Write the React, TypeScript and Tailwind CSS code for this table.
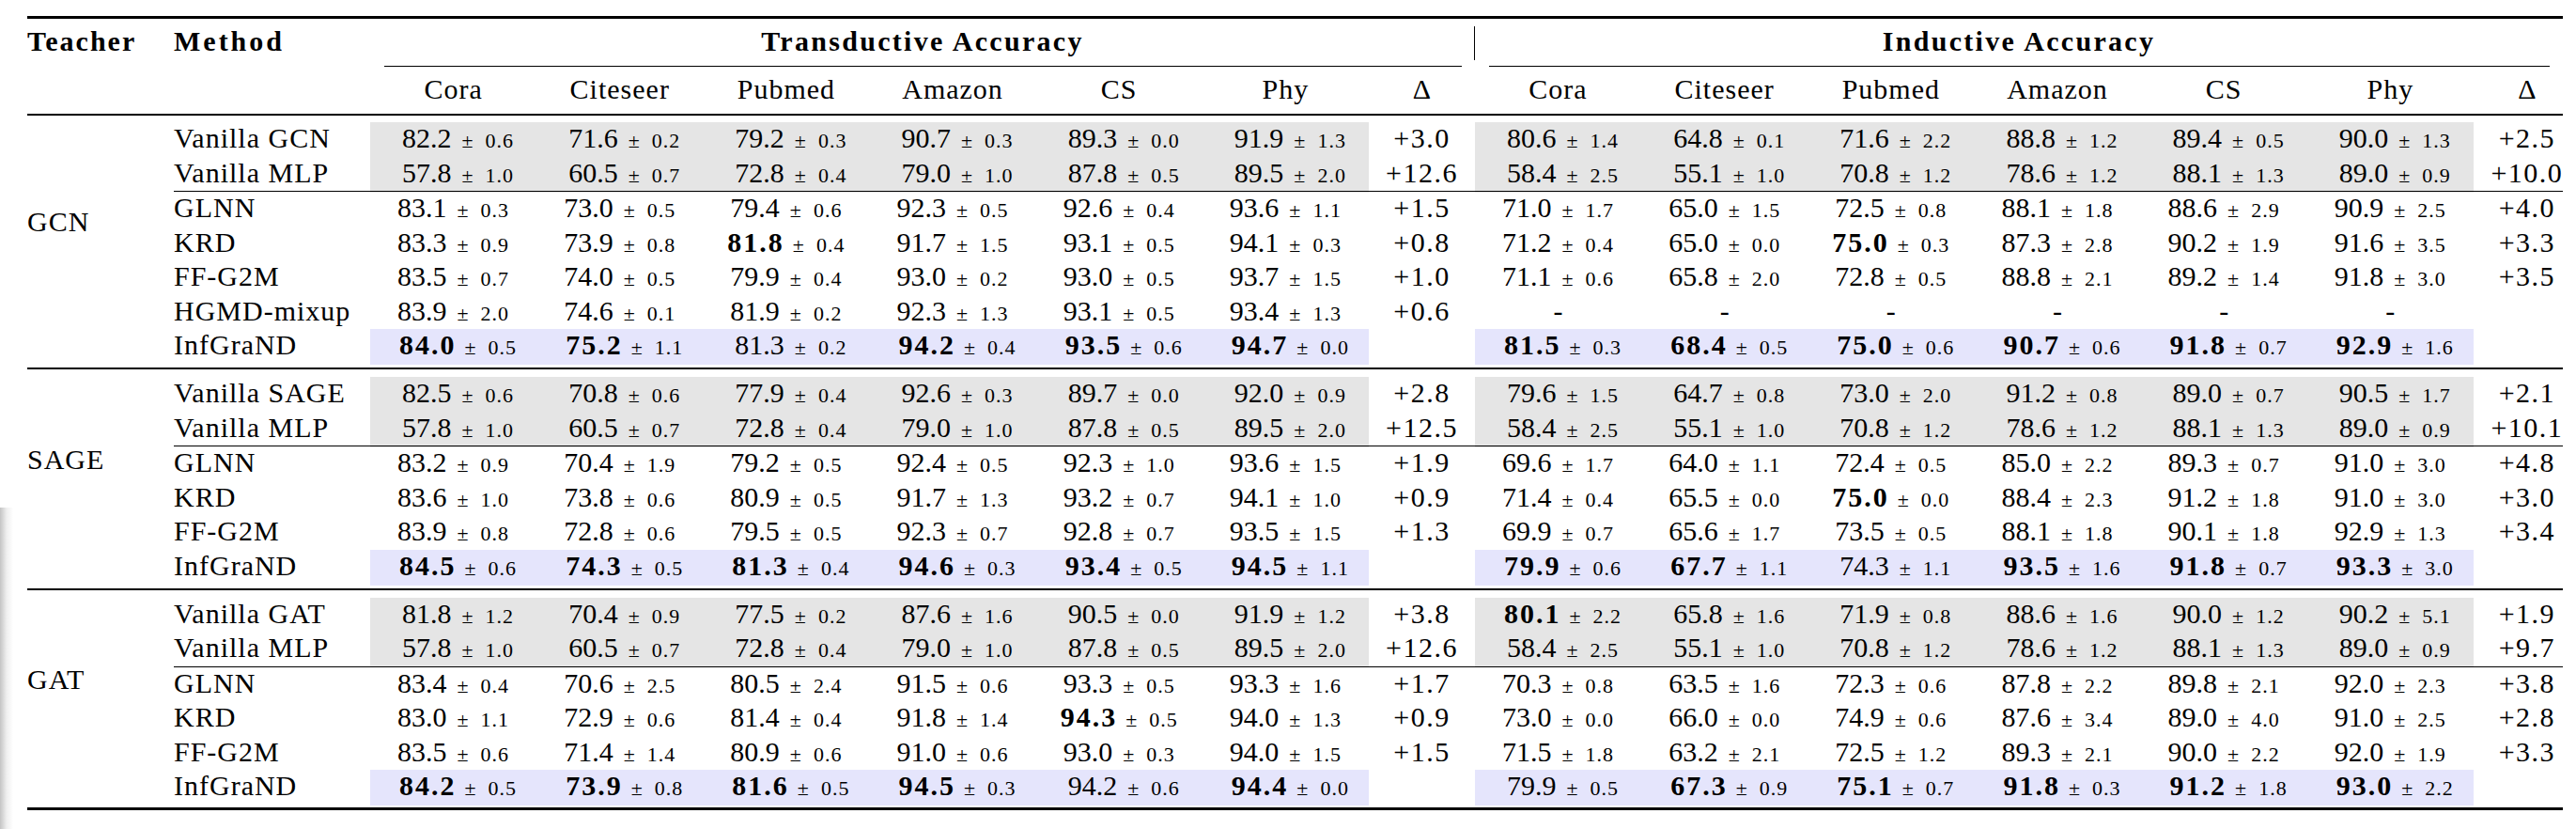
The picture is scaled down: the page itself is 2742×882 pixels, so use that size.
import React from "react";

type Row = string[];
type Section = { teacher: string; vanilla: Row[]; rest: Row[] };

const SECTIONS: Section[] = [
  {
    teacher: "GCN",
    vanilla: [
      ["Vanilla GCN", "82.2 0.6", "71.6 0.2", "79.2 0.3", "90.7 0.3", "89.3 0.0", "91.9 1.3", "+3.0", "80.6 1.4", "64.8 0.1", "71.6 2.2", "88.8 1.2", "89.4 0.5", "90.0 1.3", "+2.5"],
      ["Vanilla MLP", "57.8 1.0", "60.5 0.7", "72.8 0.4", "79.0 1.0", "87.8 0.5", "89.5 2.0", "+12.6", "58.4 2.5", "55.1 1.0", "70.8 1.2", "78.6 1.2", "88.1 1.3", "89.0 0.9", "+10.0"],
    ],
    rest: [
      ["GLNN", "83.1 0.3", "73.0 0.5", "79.4 0.6", "92.3 0.5", "92.6 0.4", "93.6 1.1", "+1.5", "71.0 1.7", "65.0 1.5", "72.5 0.8", "88.1 1.8", "88.6 2.9", "90.9 2.5", "+4.0"],
      ["KRD", "83.3 0.9", "73.9 0.8", "*81.8 0.4", "91.7 1.5", "93.1 0.5", "94.1 0.3", "+0.8", "71.2 0.4", "65.0 0.0", "*75.0 0.3", "87.3 2.8", "90.2 1.9", "91.6 3.5", "+3.3"],
      ["FF-G2M", "83.5 0.7", "74.0 0.5", "79.9 0.4", "93.0 0.2", "93.0 0.5", "93.7 1.5", "+1.0", "71.1 0.6", "65.8 2.0", "72.8 0.5", "88.8 2.1", "89.2 1.4", "91.8 3.0", "+3.5"],
      ["HGMD-mixup", "83.9 2.0", "74.6 0.1", "81.9 0.2", "92.3 1.3", "93.1 0.5", "93.4 1.3", "+0.6", "-", "-", "-", "-", "-", "-", ""],
      ["InfGraND", "*84.0 0.5", "*75.2 1.1", "81.3 0.2", "*94.2 0.4", "*93.5 0.6", "*94.7 0.0", "", "*81.5 0.3", "*68.4 0.5", "*75.0 0.6", "*90.7 0.6", "*91.8 0.7", "*92.9 1.6", ""],
    ],
  },
  {
    teacher: "SAGE",
    vanilla: [
      ["Vanilla SAGE", "82.5 0.6", "70.8 0.6", "77.9 0.4", "92.6 0.3", "89.7 0.0", "92.0 0.9", "+2.8", "79.6 1.5", "64.7 0.8", "73.0 2.0", "91.2 0.8", "89.0 0.7", "90.5 1.7", "+2.1"],
      ["Vanilla MLP", "57.8 1.0", "60.5 0.7", "72.8 0.4", "79.0 1.0", "87.8 0.5", "89.5 2.0", "+12.5", "58.4 2.5", "55.1 1.0", "70.8 1.2", "78.6 1.2", "88.1 1.3", "89.0 0.9", "+10.1"],
    ],
    rest: [
      ["GLNN", "83.2 0.9", "70.4 1.9", "79.2 0.5", "92.4 0.5", "92.3 1.0", "93.6 1.5", "+1.9", "69.6 1.7", "64.0 1.1", "72.4 0.5", "85.0 2.2", "89.3 0.7", "91.0 3.0", "+4.8"],
      ["KRD", "83.6 1.0", "73.8 0.6", "80.9 0.5", "91.7 1.3", "93.2 0.7", "94.1 1.0", "+0.9", "71.4 0.4", "65.5 0.0", "*75.0 0.0", "88.4 2.3", "91.2 1.8", "91.0 3.0", "+3.0"],
      ["FF-G2M", "83.9 0.8", "72.8 0.6", "79.5 0.5", "92.3 0.7", "92.8 0.7", "93.5 1.5", "+1.3", "69.9 0.7", "65.6 1.7", "73.5 0.5", "88.1 1.8", "90.1 1.8", "92.9 1.3", "+3.4"],
      ["InfGraND", "*84.5 0.6", "*74.3 0.5", "*81.3 0.4", "*94.6 0.3", "*93.4 0.5", "*94.5 1.1", "", "*79.9 0.6", "*67.7 1.1", "74.3 1.1", "*93.5 1.6", "*91.8 0.7", "*93.3 3.0", ""],
    ],
  },
  {
    teacher: "GAT",
    vanilla: [
      ["Vanilla GAT", "81.8 1.2", "70.4 0.9", "77.5 0.2", "87.6 1.6", "90.5 0.0", "91.9 1.2", "+3.8", "*80.1 2.2", "65.8 1.6", "71.9 0.8", "88.6 1.6", "90.0 1.2", "90.2 5.1", "+1.9"],
      ["Vanilla MLP", "57.8 1.0", "60.5 0.7", "72.8 0.4", "79.0 1.0", "87.8 0.5", "89.5 2.0", "+12.6", "58.4 2.5", "55.1 1.0", "70.8 1.2", "78.6 1.2", "88.1 1.3", "89.0 0.9", "+9.7"],
    ],
    rest: [
      ["GLNN", "83.4 0.4", "70.6 2.5", "80.5 2.4", "91.5 0.6", "93.3 0.5", "93.3 1.6", "+1.7", "70.3 0.8", "63.5 1.6", "72.3 0.6", "87.8 2.2", "89.8 2.1", "92.0 2.3", "+3.8"],
      ["KRD", "83.0 1.1", "72.9 0.6", "81.4 0.4", "91.8 1.4", "*94.3 0.5", "94.0 1.3", "+0.9", "73.0 0.0", "66.0 0.0", "74.9 0.6", "87.6 3.4", "89.0 4.0", "91.0 2.5", "+2.8"],
      ["FF-G2M", "83.5 0.6", "71.4 1.4", "80.9 0.6", "91.0 0.6", "93.0 0.3", "94.0 1.5", "+1.5", "71.5 1.8", "63.2 2.1", "72.5 1.2", "89.3 2.1", "90.0 2.2", "92.0 1.9", "+3.3"],
      ["InfGraND", "*84.2 0.5", "*73.9 0.8", "*81.6 0.5", "*94.5 0.3", "94.2 0.6", "*94.4 0.0", "", "79.9 0.5", "*67.3 0.9", "*75.1 0.7", "*91.8 0.3", "*91.2 1.8", "*93.0 2.2", ""],
    ],
  },
];

const ROW_GRID =
  "grid grid-cols-[209px_repeat(6,177.1667px)_113px_repeat(6,177.1667px)_95px]";
const FULL_GRID =
  "grid grid-cols-[156px_209px_repeat(6,177.1667px)_113px_repeat(6,177.1667px)_95px]";

function Value({ s }: { s: string }) {
  if (s === "-") return <span className="text-[30px]">-</span>;
  if (s === "") return null;
  const bold = s.startsWith("*");
  const [a, b] = s.replace("*", "").split(" ");
  return (
    <span className="whitespace-nowrap">
      <span className={bold ? "text-[30px] font-bold tracking-[2px]" : "text-[30px]"}>{a}</span>
      <span className={bold ? "text-[22px] ml-[9px]" : "text-[22px] ml-[11px]"}>±</span>
      <span className="text-[22px] tracking-[1px] ml-[13px]">{b}</span>
    </span>
  );
}

function DataRow({ row, kind }: { row: Row; kind: "v" | "n" | "o" }) {
  const bg = kind === "v" ? "bg-[#e5e5e5] pl-[10px]" : kind === "o" ? "bg-[#e5e5fc] pl-[10px]" : "";
  return (
    <div className={`${ROW_GRID} h-[36.5px] leading-[33px]`}>
      <div className="text-[30px] tracking-[1px] whitespace-nowrap">{row[0]}</div>
      {row.slice(1, 7).map((c, i) => (
        <div key={"t" + i} className={`flex justify-center ${c === "-" ? "" : bg}`}>
          <Value s={c} />
        </div>
      ))}
      <div className="flex justify-center text-[30px] tracking-[1.5px]">{row[7]}</div>
      {row.slice(8, 14).map((c, i) => (
        <div key={"i" + i} className={`flex justify-center ${c === "-" ? "" : bg}`}>
          <Value s={c} />
        </div>
      ))}
      <div className="flex justify-center pl-[19px] text-[30px] tracking-[1.5px]">{row[14]}</div>
    </div>
  );
}

function SectionBlock({ sec }: { sec: Section }) {
  return (
    <div className="flex">
      <div className="w-[156px] flex items-center pb-[46px] text-[30px] tracking-[1px] leading-[33px]">
        {sec.teacher}
      </div>
      <div className="flex flex-col">
        {sec.vanilla.map((r, i) => (
          <DataRow key={i} row={r} kind="v" />
        ))}
        <div className="h-px bg-black" />
        {sec.rest.map((r, i) => (
          <DataRow key={i} row={r} kind={r[0] === "InfGraND" ? "o" : "n"} />
        ))}
      </div>
    </div>
  );
}

const HEADS = ["Cora", "Citeseer", "Pubmed", "Amazon", "CS", "Phy"];

export default function App() {
  return (
    <div className="relative w-[2742px] h-[882px] overflow-hidden bg-white text-black font-['Liberation_Serif','Times_New_Roman',serif]">
      <div className="absolute left-0 top-[540px] bottom-0 w-[14px] bg-linear-to-r from-[#c4c4c4] via-[#efefef] to-white" />
      <div className="pt-[17px] pl-[29px]">
        <div className="w-[2699px]">
          <div className="h-[3px] bg-black" />
          {/* header row 1 */}
          <div className="grid grid-cols-[156px_209px_1176px_1158px] h-[50px] leading-[33px]">
            <div className="pt-[7px] text-[30px] font-bold tracking-[2px]">Teacher</div>
            <div className="pt-[7px] text-[30px] font-bold tracking-[3px]">Method</div>
            <div className="pt-[7px] text-center text-[30px] font-bold tracking-[2.3px]">Transductive Accuracy</div>
            <div className="flex">
              <div className="-ml-px mt-[8px] h-[36px] w-px bg-black" />
              <div className="flex-1 pt-[7px] text-center text-[30px] font-bold tracking-[2.3px]">Inductive Accuracy</div>
            </div>
          </div>
          {/* cmidrules */}
          <div className="grid grid-cols-[156px_209px_1176px_1158px] h-px">
            <div />
            <div />
            <div className="ml-[15px] mr-[14px] bg-black" />
            <div className="ml-[15px] mr-[14px] bg-black" />
          </div>
          {/* header row 2 */}
          <div className={`${FULL_GRID} h-[50px] leading-[33px] text-[30px]`}>
            <div />
            <div />
            {HEADS.map((h) => (
              <div key={"th" + h} className="pt-[7px] text-center tracking-[1px]">{h}</div>
            ))}
            <div className="pt-[7px] text-center">Δ</div>
            {HEADS.map((h) => (
              <div key={"ih" + h} className="pt-[7px] text-center tracking-[1px]">{h}</div>
            ))}
            <div className="pt-[7px] pl-[19px] text-center">Δ</div>
          </div>
          <div className="h-[2px] bg-black" />
          <div className="h-[7px]" />
          {SECTIONS.map((s, i) => (
            <div key={s.teacher}>
              <SectionBlock sec={s} />
              {i < SECTIONS.length - 1 ? (
                <div className="mt-[4.5px] mb-[8px] h-[2px] bg-black" />
              ) : (
                <div className="mt-[3px] h-[3px] bg-black" />
              )}
            </div>
          ))}
        </div>
      </div>
    </div>
  );
}
